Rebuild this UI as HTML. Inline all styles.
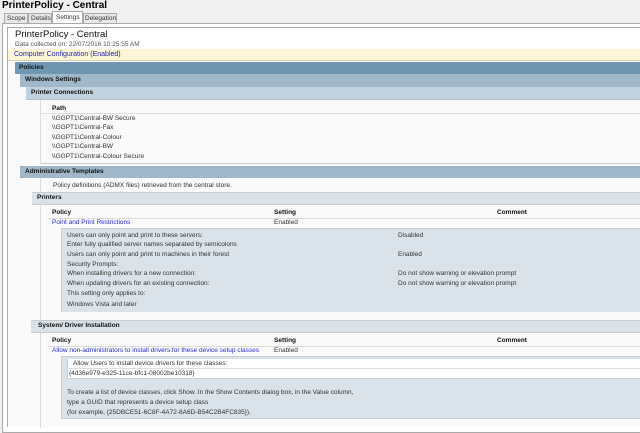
<!DOCTYPE html>
<html><head><meta charset="utf-8"><style>
*{margin:0;padding:0;box-sizing:border-box}
body{width:640px;height:425px;overflow:hidden;background:#f0f0f0;font-family:"Liberation Sans",sans-serif;font-size:6.5px;color:#333;position:relative}
div{position:absolute}
.t{white-space:nowrap;line-height:10px}
.b{font-weight:bold;color:#111}
.l{color:#2a2aee}
</style></head><body>
<div class="t b" style="left:2px;top:0;font-size:10px;line-height:12px;color:#000">PrinterPolicy - Central</div>
<div style="left:4px;top:13px;width:24px;height:11px;border:1px solid #aaa;background:#e8e8e8"></div>
<div class="t" style="left:7px;top:13px;line-height:11px;font-size:6.5px">Scope</div>
<div style="left:28px;top:13px;width:24px;height:11px;border:1px solid #aaa;background:#e8e8e8"></div>
<div class="t" style="left:31px;top:13px;line-height:11px">Details</div>
<div style="left:52px;top:11px;width:31px;height:13px;border:1px solid #aaa;border-bottom:none;background:#fff"></div>
<div class="t" style="left:56px;top:12px;line-height:11px">Settings</div>
<div style="left:83px;top:13px;width:34px;height:11px;border:1px solid #aaa;background:#e8e8e8"></div>
<div class="t" style="left:85px;top:13px;line-height:11px">Delegation</div>
<div style="left:2px;top:23px;width:640px;height:410px;border:1px solid #aaa;background:#fff"></div>
<div style="left:7px;top:27px;width:640px;height:400px;border-left:1px solid #aaa;border-top:1px solid #aaa;background:#fafafa"></div>
<div style="left:8px;top:28px;width:640px;height:21px;background:#fff"></div>
<div class="t" style="left:15px;top:29px;font-size:9.5px;line-height:12px;color:#111">PrinterPolicy - Central</div>
<div class="t" style="left:15px;top:40px;color:#555">Data collected on: 22/07/2016 10:25:55 AM</div>
<div style="left:8px;top:49px;width:640px;height:12px;background:#fcf6d6;border-bottom:1px solid #d8d0b0"></div>
<div class="t" style="left:14px;top:50px;color:#1f1fbf;font-size:7px">Computer Configuration (Enabled)</div>
<div style="left:15px;top:62px;width:640px;height:12px;background:#7097b2"></div>
<div class="t b" style="left:19px;top:63px">Policies</div>
<div style="left:20px;top:74px;width:640px;height:13px;background:#a0b8ca"></div>
<div class="t b" style="left:25px;top:75px">Windows Settings</div>
<div style="left:26px;top:87px;width:640px;height:13px;background:#c0d2de;border-bottom:1px solid #b0c0cc"></div>
<div class="t b" style="left:31px;top:88px">Printer Connections</div>
<div style="left:40px;top:100px;width:640px;height:64px;background:#f9f9f9;border-left:1px solid #ddd;border-bottom:1px solid #ccc"></div>
<div class="t b" style="left:52px;top:104px">Path</div>
<div style="left:41px;top:113px;width:640px;height:1px;background:#ddd"></div>
<div class="t" style="left:52px;top:114px">\\GGPT1\Central-BW Secure</div>
<div class="t" style="left:52px;top:123px">\\GGPT1\Central-Fax</div>
<div class="t" style="left:52px;top:133px">\\GGPT1\Central-Colour</div>
<div class="t" style="left:52px;top:142px">\\GGPT1\Central-BW</div>
<div class="t" style="left:52px;top:152px">\\GGPT1\Central-Colour Secure</div>
<div style="left:20px;top:166px;width:640px;height:12px;background:#a0b8ca"></div>
<div class="t b" style="left:25px;top:167px">Administrative Templates</div>
<div style="left:40px;top:178px;width:640px;height:250px;border-left:1px solid #ddd"></div>
<div class="t" style="left:53px;top:181px">Policy definitions (ADMX files) retrieved from the central store.</div>
<div style="left:32px;top:192px;width:640px;height:13px;background:#d9e2e9;border-top:1px solid #ccc;border-bottom:1px solid #ccc"></div>
<div class="t b" style="left:37px;top:193px">Printers</div>
<div class="t b" style="left:52px;top:208px">Policy</div>
<div class="t b" style="left:274px;top:208px">Setting</div>
<div class="t b" style="left:497px;top:208px">Comment</div>
<div style="left:48px;top:218px;width:640px;height:1px;background:#ddd"></div>
<div class="t l" style="left:52px;top:218px">Point and Print Restrictions</div>
<div class="t" style="left:274px;top:218px">Enabled</div>
<div style="left:61px;top:228px;width:640px;height:84px;background:#dae3ea;border-top:1px solid #ccc;border-left:1px solid #ccc"></div>
<div class="t" style="left:67px;top:231px">Users can only point and print to these servers:</div>
<div class="t" style="left:398px;top:231px">Disabled</div>
<div class="t" style="left:67px;top:240px">Enter fully qualified server names separated by semicolons</div>
<div class="t" style="left:67px;top:250px">Users can only point and print to machines in their forest</div>
<div class="t" style="left:398px;top:250px">Enabled</div>
<div class="t" style="left:67px;top:260px">Security Prompts:</div>
<div class="t" style="left:67px;top:269px">When installing drivers for a new connection:</div>
<div class="t" style="left:398px;top:269px">Do not show warning or elevation prompt</div>
<div class="t" style="left:67px;top:279px">When updating drivers for an existing connection:</div>
<div class="t" style="left:398px;top:279px">Do not show warning or elevation prompt</div>
<div class="t" style="left:67px;top:289px">This setting only applies to:</div>
<div class="t" style="left:67px;top:300px">Windows Vista and later</div>
<div style="left:31px;top:320px;width:640px;height:13px;background:#d9e2e9;border-top:1px solid #ccc;border-bottom:1px solid #ccc"></div>
<div class="t b" style="left:38px;top:321px">System/ Driver Installation</div>
<div class="t b" style="left:52px;top:336px">Policy</div>
<div class="t b" style="left:274px;top:336px">Setting</div>
<div class="t b" style="left:497px;top:336px">Comment</div>
<div style="left:48px;top:346px;width:640px;height:1px;background:#ddd"></div>
<div class="t l" style="left:52px;top:346px">Allow non-administrators to install drivers for these device setup classes</div>
<div class="t" style="left:274px;top:346px">Enabled</div>
<div style="left:61px;top:356px;width:640px;height:63px;background:#dae3ea;border-top:1px solid #ccc;border-left:1px solid #ccc;border-bottom:1px solid #ccc"></div>
<div style="left:67px;top:359px;width:640px;height:20px;background:#fff;border-left:1px solid #ccc;border-bottom:1px solid #ccc"></div>
<div style="left:67px;top:368px;width:640px;height:1px;background:#ddd"></div>
<div class="t" style="left:73px;top:359px">Allow Users to install device drivers for these classes:</div>
<div class="t" style="left:69px;top:369px">{4d36e979-e325-11ce-bfc1-08002be10318}</div>
<div class="t" style="left:67px;top:388px">To create a list of device classes, click Show. In the Show Contents dialog box, in the Value column,</div>
<div class="t" style="left:67px;top:398px">type a GUID that represents a device setup class</div>
<div class="t" style="left:67px;top:408px">(for example, {25DBCE51-6C8F-4A72-8A6D-B54C2B4FC835}).</div>
</body></html>
